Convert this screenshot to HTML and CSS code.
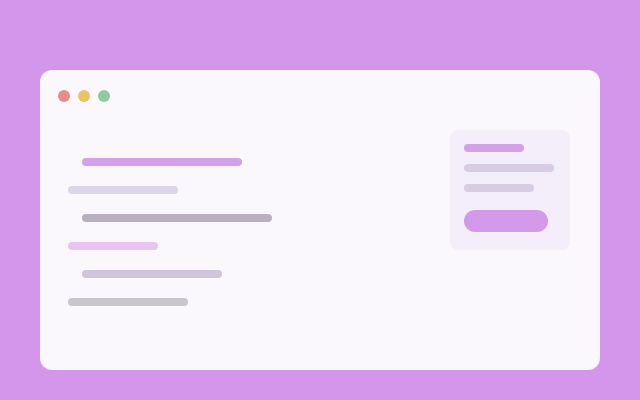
FILE: index.html
```html
<!DOCTYPE html>
<html>
<head>
<meta charset="utf-8">
<link rel="stylesheet" href="styles.css">
</head>
<body>
<div class="window">
  <div class="titlebar">
    <span class="dot red"></span>
    <span class="dot yellow"></span>
    <span class="dot green"></span>
  </div>
  <div class="content">
    <div class="lines">
      <div class="line indent purple" style="width:160px"></div>
      <div class="line lavender" style="width:110px"></div>
      <div class="line indent slate" style="width:190px"></div>
      <div class="line pink" style="width:90px"></div>
      <div class="line indent lilac" style="width:140px"></div>
      <div class="line grey" style="width:120px"></div>
    </div>
    <div class="panel">
      <div class="pline purple" style="width:60px"></div>
      <div class="pline muted" style="width:90px"></div>
      <div class="pline muted" style="width:70px"></div>
      <div class="pbutton"></div>
    </div>
  </div>
</div>
</body>
</html>
```
FILE: styles.css
```css
html, body {
  margin: 0;
  padding: 0;
}
body {
  width: 640px;
  height: 400px;
  background: #d396ea;
  padding: 70px 40px 30px;
  box-sizing: border-box;
  font-family: "Liberation Sans", sans-serif;
}
.window {
  height: 300px;
  background: #faf7fd;
  border-radius: 12px;
  display: flex;
  flex-direction: column;
}
.titlebar {
  display: flex;
  gap: 8px;
  padding: 20px 0 0 18px;
}
.dot {
  width: 12px;
  height: 12px;
  border-radius: 50%;
}
.red { background: #e88b8b; }
.yellow { background: #ecc266; }
.green { background: #8fcb9d; }
.content {
  display: flex;
  justify-content: space-between;
  align-items: flex-start;
  padding: 28px 30px 0 28px;
}
.lines {
  display: flex;
  flex-direction: column;
  gap: 20px;
  padding-top: 28px;
}
.line {
  height: 8px;
  border-radius: 4px;
}
.indent { margin-left: 14px; }
.purple { background: #d59fe9; }
.lavender { background: #dcd5e7; }
.slate { background: #b8afc1; }
.pink { background: #e8c5f0; }
.lilac { background: #d1c5dd; }
.grey { background: #c9c6cd; }
.panel {
  width: 120px;
  height: 120px;
  box-sizing: border-box;
  background: #f3eef9;
  border-radius: 8px;
  padding: 14px;
  display: flex;
  flex-direction: column;
  gap: 12px;
}
.pline {
  height: 8px;
  border-radius: 4px;
}
.muted { background: #d8cce3; }
.pbutton {
  margin-top: 6px;
  width: 84px;
  height: 22px;
  border-radius: 11px;
  background: #d39ae9;
}
```
